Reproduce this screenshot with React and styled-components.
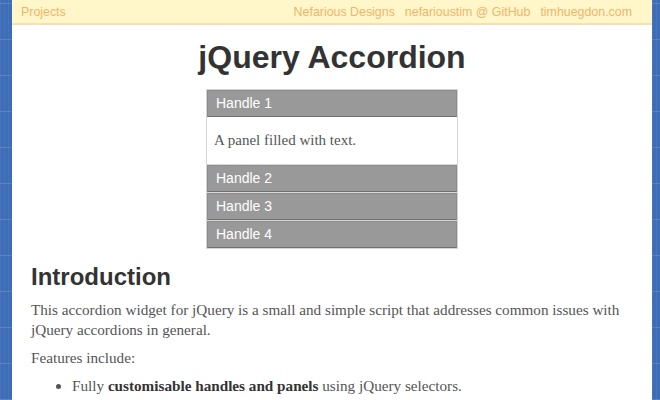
import React, { useState } from "react";
import styled, { createGlobalStyle } from "styled-components";

const GlobalStyle = createGlobalStyle`
  body {
    margin: 0;
    background-color: #3e6db7;
    background-image:
      repeating-linear-gradient(0deg, rgba(255,255,255,0.14) 0 1px, transparent 1px 36px),
      repeating-linear-gradient(90deg, rgba(255,255,255,0.05) 0 1px, transparent 1px 4px);
  }
`;

const Page = styled.div`
  margin: 0 8px 0 12px;
  min-height: 400px;
  background: #fff;
  font-family: "Liberation Serif", Georgia, serif;
  color: #555;
  overflow: hidden;
`;

const TopBar = styled.div`
  display: flex;
  justify-content: space-between;
  align-items: center;
  height: 23px;
  padding: 0 20px 0 9px;
  background: #fff7c9;
  border-bottom: 2px solid #fbe0a6;
  font-family: "Liberation Sans", Arial, sans-serif;
  font-size: 12.4px;
`;

const Links = styled.div`
  display: flex;
  gap: 10px;
`;

const TopLink = styled.a`
  color: #f1b46c;
  text-decoration: none;
`;

const Title = styled.h1`
  margin: 13px 0 13px;
  text-align: center;
  font-family: "Liberation Sans", Arial, sans-serif;
  font-size: 32px;
  line-height: 38px;
  font-weight: bold;
  color: #333;
`;

const Accordion = styled.div`
  width: 250px;
  margin: 0 auto;
  border: 1px solid #d4d4d4;
  background: #d8d8d8;
  display: flex;
  flex-direction: column;
  gap: 1px;
`;

const Handle = styled.div`
  height: 25px;
  line-height: 25px;
  padding-left: 8px;
  background: #999;
  border: 1px solid #8c8c8c;
  border-bottom-color: #6f6f6f;
  color: #fff;
  font-family: "Liberation Sans", Arial, sans-serif;
  font-size: 14px;
  cursor: pointer;
`;

const Panel = styled.div`
  background: #fff;
  padding: 14px 7px 15px;
  margin: -1px 0 0;
  font-size: 15px;
  line-height: 18px;
  color: #555;
`;

const Content = styled.div`
  padding: 0 19px;
`;

const Heading = styled.h2`
  margin: 14px 0 9px;
  font-family: "Liberation Sans", Arial, sans-serif;
  font-size: 24px;
  line-height: 28px;
  font-weight: bold;
  color: #333;
`;

const Para = styled.p`
  margin: 0 0 8px;
  font-size: 15.2px;
  line-height: 20px;
`;

const List = styled.ul`
  margin: 0;
  padding-left: 41px;
  font-size: 15.2px;
  line-height: 20px;
`;

const Strong = styled.strong`
  color: #333;
`;

const items = [
  { title: "Handle 1", body: "A panel filled with text." },
  { title: "Handle 2", body: "Another panel." },
  { title: "Handle 3", body: "A third panel." },
  { title: "Handle 4", body: "The last panel." },
];

const App = () => {
  const [open, setOpen] = useState(0);

  return (
    <Page>
      <GlobalStyle />
      <TopBar>
        <TopLink href="#">Projects</TopLink>
        <Links>
          <TopLink href="#">Nefarious Designs</TopLink>
          <TopLink href="#">nefarioustim @ GitHub</TopLink>
          <TopLink href="#">timhuegdon.com</TopLink>
        </Links>
      </TopBar>
      <Title>jQuery Accordion</Title>
      <Accordion>
        {items.map((item, i) => (
          <React.Fragment key={item.title}>
            <Handle onClick={() => setOpen(i === open ? -1 : i)}>{item.title}</Handle>
            {open === i && <Panel>{item.body}</Panel>}
          </React.Fragment>
        ))}
      </Accordion>
      <Content>
        <Heading>Introduction</Heading>
        <Para>
          This accordion widget for jQuery is a small and simple script that addresses common issues with
          jQuery accordions in general.
        </Para>
        <Para>Features include:</Para>
        <List>
          <li>
            Fully <Strong>customisable handles and panels</Strong> using jQuery selectors.
          </li>
        </List>
      </Content>
    </Page>
  );
};

export default App;
